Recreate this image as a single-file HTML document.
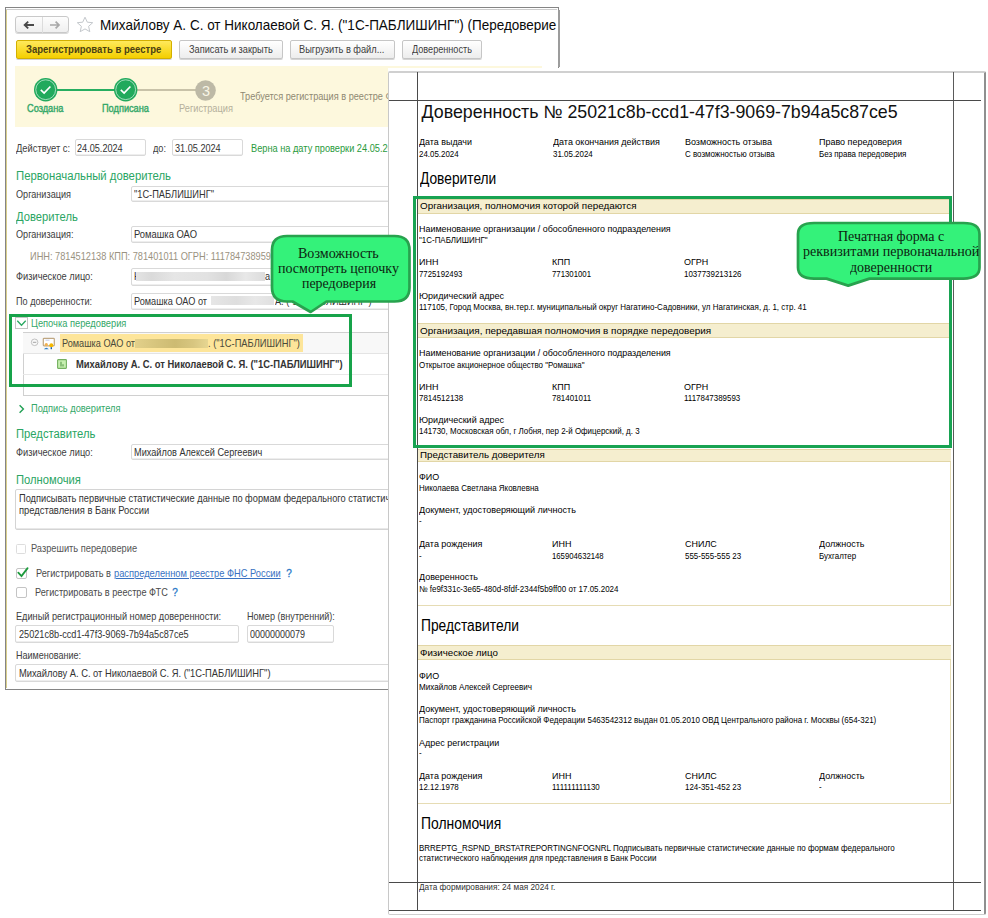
<!DOCTYPE html>
<html><head><meta charset="utf-8"><style>
html,body{margin:0;padding:0;}
body{width:988px;height:918px;position:relative;overflow:hidden;background:#fff;}
.t{position:absolute;white-space:nowrap;line-height:1;transform-origin:0 0;}
.r{position:absolute;}
</style></head><body>
<div class="r" style="left:5.00px;top:7.00px;width:554.00px;height:683.00px;border:1.4px solid #858585;border-bottom-width:1.6px;background:#fff;box-sizing:border-box;"></div>
<div class="r" style="left:6.40px;top:9.00px;width:551.00px;height:1.00px;background:#cdcdcd;"></div>
<div class="r" style="left:6.00px;top:9.50px;width:1.00px;height:678.00px;background:#d9cf8c;"></div>
<div class="r" style="left:15.00px;top:15.50px;width:53.50px;height:17.50px;border:1px solid #c9c9c9;border-radius:3px;background:linear-gradient(#fdfdfd,#efefef);box-sizing:border-box;box-shadow:0 1px 0 #d8d8d8;"></div>
<div class="r" style="left:42.40px;top:16.50px;width:1.00px;height:16.00px;background:#dcdcdc;"></div>
<svg class="r" style="left:23px;top:20px" width="14" height="10" viewBox="0 0 14 10"><path d="M1.5 5H11M5.2 1.6L1.6 5l3.6 3.4" fill="none" stroke="#4a4a4a" stroke-width="1.8"/></svg>
<svg class="r" style="left:49px;top:19.5px" width="14" height="10" viewBox="0 0 14 10"><path d="M1 5H9.5M6.6 1.6L10 5l-3.4 3.4" fill="none" stroke="#a8a8a8" stroke-width="1.7"/></svg>
<svg class="r" style="left:76px;top:16px" width="18" height="17" viewBox="0 0 18 17"><path d="M9 1.2l2.3 5 5.4.5-4.1 3.6 1.2 5.4L9 12.9l-4.8 2.8 1.2-5.4L1.3 6.7l5.4-.5z" fill="none" stroke="#c4c8cc" stroke-width="1"/></svg>
<div class="t" style="left:100.30px;top:18.00px;font-size:14.30px;color:#0a0a0a;font-family:'Liberation Sans', sans-serif;font-weight:400;transform:scaleX(0.9445);">Михайлову А. С. от Николаевой С. Я. (&quot;1С-ПАБЛИШИНГ&quot;) (Передоверие</div>
<div class="r" style="left:558.00px;top:10.00px;width:2.00px;height:57.00px;background:#9c9c9c;"></div>
<div class="r" style="left:15.50px;top:40.30px;width:156.30px;height:18.40px;border:1px solid #d3b000;border-radius:2px;background:linear-gradient(#ffe95c,#f4cf00);box-sizing:border-box;box-shadow:0 1px 0 #d0d0d0;"></div>
<div class="t" style="left:25.90px;top:45.00px;font-size:10.20px;color:#4a4112;font-family:'Liberation Sans', sans-serif;font-weight:700;transform:scaleX(0.9329);">Зарегистрировать в реестре</div>
<div class="r" style="left:178.50px;top:40.30px;width:104.00px;height:18.40px;border:1px solid #c6c6c6;border-radius:2px;background:linear-gradient(#ffffff,#ededed);box-sizing:border-box;box-shadow:0 1px 0 #d5d5d5;"></div>
<div class="t" style="left:188.70px;top:45.00px;font-size:10.20px;color:#404040;font-family:'Liberation Sans', sans-serif;font-weight:400;transform:scaleX(0.9034);">Записать и закрыть</div>
<div class="r" style="left:289.70px;top:40.30px;width:105.30px;height:18.40px;border:1px solid #c6c6c6;border-radius:2px;background:linear-gradient(#ffffff,#ededed);box-sizing:border-box;box-shadow:0 1px 0 #d5d5d5;"></div>
<div class="t" style="left:299.40px;top:45.00px;font-size:10.20px;color:#404040;font-family:'Liberation Sans', sans-serif;font-weight:400;transform:scaleX(0.9079);">Выгрузить в файл...</div>
<div class="r" style="left:402.20px;top:40.30px;width:80.10px;height:18.40px;border:1px solid #c6c6c6;border-radius:2px;background:linear-gradient(#ffffff,#ededed);box-sizing:border-box;box-shadow:0 1px 0 #d5d5d5;"></div>
<div class="t" style="left:411.90px;top:45.00px;font-size:10.20px;color:#404040;font-family:'Liberation Sans', sans-serif;font-weight:400;transform:scaleX(0.8949);">Доверенность</div>
<div class="r" style="left:15.30px;top:66.00px;width:527.00px;height:60.50px;background:#fdf8dd;"></div>
<div class="r" style="left:45.50px;top:88.60px;width:80.00px;height:2.40px;background:#27ae60;"></div>
<div class="r" style="left:125.50px;top:89.00px;width:80.00px;height:1.60px;background:#c8c2a8;"></div>
<svg class="r" style="left:33.8px;top:78.2px" width="24" height="24" viewBox="0 0 24 24"><circle cx="11.7" cy="11.7" r="11.7" fill="#21a95c"/><circle cx="11.7" cy="11.7" r="9.9" fill="none" stroke="#d6f2e2" stroke-width="0.7"/><path d="M6.8 11.9l3.3 3.2 6.3-6.6" fill="none" stroke="#fff" stroke-width="1.7"/></svg>
<svg class="r" style="left:113.8px;top:78.2px" width="24" height="24" viewBox="0 0 24 24"><circle cx="11.7" cy="11.7" r="11.7" fill="#21a95c"/><circle cx="11.7" cy="11.7" r="9.9" fill="none" stroke="#d6f2e2" stroke-width="0.7"/><path d="M6.8 11.9l3.3 3.2 6.3-6.6" fill="none" stroke="#fff" stroke-width="1.7"/></svg>
<svg class="r" style="left:195.3px;top:79.5px" width="21" height="21" viewBox="0 0 21 21"><circle cx="10.5" cy="10.5" r="10.3" fill="#bdb9a6"/></svg>
<div class="t" style="left:201.90px;top:84.00px;font-size:14.50px;color:#f8f5e6;font-family:'Liberation Sans', sans-serif;font-weight:400;">3</div>
<div class="t" style="left:27.40px;top:104.00px;font-size:10.20px;color:#35a869;font-family:'Liberation Sans', sans-serif;font-weight:400;transform:scaleX(0.9055);-webkit-text-stroke:0.4px #35a869;">Создана</div>
<div class="t" style="left:101.80px;top:104.00px;font-size:10.20px;color:#35a869;font-family:'Liberation Sans', sans-serif;font-weight:400;transform:scaleX(0.9033);-webkit-text-stroke:0.4px #35a869;">Подписана</div>
<div class="t" style="left:178.50px;top:104.00px;font-size:10.20px;color:#b5b09c;font-family:'Liberation Sans', sans-serif;font-weight:400;transform:scaleX(0.9056);">Регистрация</div>
<div class="t" style="left:240.00px;top:92.00px;font-size:10.20px;color:#8f8872;font-family:'Liberation Sans', sans-serif;font-weight:400;transform:scaleX(0.9000);">Требуется регистрация в реестре Ф</div>
<div class="t" style="left:15.70px;top:144.00px;font-size:10.20px;color:#404040;font-family:'Liberation Sans', sans-serif;font-weight:400;transform:scaleX(0.9186);">Действует с:</div>
<div class="r" style="left:74.50px;top:139.20px;width:71.50px;height:17.00px;border:1px solid #d9d9d9;border-radius:2px;background:#fff;box-sizing:border-box;box-shadow:inset 0 -1px 0 #eeeeee;"></div>
<div class="t" style="left:76.50px;top:144.00px;font-size:10.30px;color:#333333;font-family:'Liberation Sans', sans-serif;font-weight:400;transform:scaleX(0.8865);">24.05.2024</div>
<div class="t" style="left:153.30px;top:144.00px;font-size:10.20px;color:#404040;font-family:'Liberation Sans', sans-serif;font-weight:400;transform:scaleX(0.9000);">до:</div>
<div class="r" style="left:171.60px;top:139.20px;width:71.80px;height:17.10px;border:1px solid #d9d9d9;border-radius:2px;background:#fff;box-sizing:border-box;box-shadow:inset 0 -1px 0 #eeeeee;"></div>
<div class="t" style="left:175.00px;top:144.00px;font-size:10.30px;color:#333333;font-family:'Liberation Sans', sans-serif;font-weight:400;transform:scaleX(0.8865);">31.05.2024</div>
<div class="t" style="left:251.30px;top:144.00px;font-size:10.40px;color:#2a9a3c;font-family:'Liberation Sans', sans-serif;font-weight:400;transform:scaleX(0.8878);">Верна на дату проверки 24.05.2024</div>
<div class="t" style="left:15.50px;top:170.00px;font-size:12.00px;color:#2aa563;font-family:'Liberation Sans', sans-serif;font-weight:400;transform:scaleX(0.9437);">Первоначальный доверитель</div>
<div class="t" style="left:15.70px;top:190.00px;font-size:10.20px;color:#404040;font-family:'Liberation Sans', sans-serif;font-weight:400;transform:scaleX(0.8940);">Организация</div>
<div class="r" style="left:131.00px;top:185.70px;width:261.00px;height:16.60px;border:1px solid #d9d9d9;border-radius:2px;background:#fff;box-sizing:border-box;box-shadow:inset 0 -1px 0 #eeeeee;"></div>
<div class="t" style="left:133.80px;top:190.00px;font-size:10.30px;color:#333333;font-family:'Liberation Sans', sans-serif;font-weight:400;transform:scaleX(0.8992);">&quot;1С-ПАБЛИШИНГ&quot;</div>
<div class="t" style="left:15.50px;top:211.00px;font-size:12.00px;color:#2aa563;font-family:'Liberation Sans', sans-serif;font-weight:400;transform:scaleX(0.9350);">Доверитель</div>
<div class="t" style="left:15.70px;top:230.00px;font-size:10.20px;color:#404040;font-family:'Liberation Sans', sans-serif;font-weight:400;transform:scaleX(0.8935);">Организация:</div>
<div class="r" style="left:130.60px;top:225.70px;width:261.40px;height:17.70px;border:1px solid #d9d9d9;border-radius:2px;background:#fff;box-sizing:border-box;box-shadow:inset 0 -1px 0 #eeeeee;"></div>
<div class="t" style="left:133.80px;top:230.00px;font-size:10.30px;color:#333333;font-family:'Liberation Sans', sans-serif;font-weight:400;transform:scaleX(0.9133);">Ромашка ОАО</div>
<div class="t" style="left:29.80px;top:252.00px;font-size:10.20px;color:#9a9281;font-family:'Liberation Sans', sans-serif;font-weight:400;transform:scaleX(0.9050);">ИНН: 7814512138 КПП: 781401011 ОГРН: 1117847389593</div>
<div class="t" style="left:15.70px;top:272.00px;font-size:10.20px;color:#404040;font-family:'Liberation Sans', sans-serif;font-weight:400;transform:scaleX(0.9095);">Физическое лицо:</div>
<div class="r" style="left:130.60px;top:268.30px;width:261.40px;height:17.30px;border:1px solid #d9d9d9;border-radius:2px;background:#fff;box-sizing:border-box;box-shadow:inset 0 -1px 0 #eeeeee;"></div>
<div class="t" style="left:133.80px;top:272.00px;font-size:10.30px;color:#333333;font-family:'Liberation Sans', sans-serif;font-weight:400;transform:scaleX(0.8900);">Н</div>
<div class="r" style="left:136.00px;top:272.00px;width:129.00px;height:9.00px;background:linear-gradient(90deg,#e4e4e4,#dadada 12%,#e6e6e6 30%,#e2e2e2 55%,#d8d8d8 70%,#e8e8e8 85%,#dcdcdc);"></div>
<div class="t" style="left:264.50px;top:272.00px;font-size:10.30px;color:#333333;font-family:'Liberation Sans', sans-serif;font-weight:400;transform:scaleX(0.8900);">а</div>
<div class="t" style="left:15.70px;top:297.00px;font-size:10.20px;color:#404040;font-family:'Liberation Sans', sans-serif;font-weight:400;transform:scaleX(0.8950);">По доверенности:</div>
<div class="r" style="left:130.60px;top:292.90px;width:261.40px;height:17.50px;border:1px solid #d9d9d9;border-radius:2px;background:#fff;box-sizing:border-box;box-shadow:inset 0 -1px 0 #eeeeee;"></div>
<div class="t" style="left:133.80px;top:297.00px;font-size:10.30px;color:#333333;font-family:'Liberation Sans', sans-serif;font-weight:400;transform:scaleX(0.8900);">Ромашка ОАО от</div>
<div class="r" style="left:211.20px;top:296.30px;width:62.70px;height:9.00px;background:linear-gradient(90deg,#e6e6e6,#dedede 40%,#e8e8e8 70%,#e0e0e0);"></div>
<div class="t" style="left:274.60px;top:297.00px;font-size:10.30px;color:#333333;font-family:'Liberation Sans', sans-serif;font-weight:400;transform:scaleX(0.8900);">А. (&quot;1С-ПАБЛИШИНГ&quot;)</div>
<div class="r" style="left:22.70px;top:332.30px;width:370.00px;height:64.00px;border:1.3px solid #d0d0d0;border-right:none;background:#fff;box-sizing:border-box;"></div>
<div class="r" style="left:23.40px;top:333.30px;width:366.00px;height:19.80px;background:#f8f8f8;"></div>
<div class="r" style="left:23.40px;top:353.10px;width:366.00px;height:1.00px;background:#e4e4e4;"></div>
<div class="r" style="left:23.40px;top:374.20px;width:366.00px;height:1.00px;background:#e8e8e8;"></div>
<div class="r" style="left:59.90px;top:333.50px;width:243.00px;height:18.60px;background:#fde59a;"></div>
<div class="t" style="left:61.60px;top:339.00px;font-size:10.30px;color:#4a4a3a;font-family:'Liberation Sans', sans-serif;font-weight:400;transform:scaleX(0.8895);">Ромашка ОАО от</div>
<div class="r" style="left:135.00px;top:338.90px;width:73.00px;height:8.70px;background:linear-gradient(90deg,#e2d08a,#d6c47c 30%,#cdbb72 55%,#d8c680 80%,#e6d692);"></div>
<div class="t" style="left:207.90px;top:339.00px;font-size:10.30px;color:#4a4a3a;font-family:'Liberation Sans', sans-serif;font-weight:400;transform:scaleX(0.9060);">. (&quot;1С-ПАБЛИШИНГ&quot;)</div>
<div class="t" style="left:75.50px;top:360.00px;font-size:10.30px;color:#333333;font-family:'Liberation Sans', sans-serif;font-weight:700;transform:scaleX(0.9130);">Михайлову А. С. от Николаевой С. Я. (&quot;1С-ПАБЛИШИНГ&quot;)</div>
<svg class="r" style="left:30px;top:338px" width="9" height="9" viewBox="0 0 9 9"><circle cx="4.6" cy="4.3" r="3.3" fill="none" stroke="#b4b4b4" stroke-width="0.8"/><path d="M2.9 4.3h3.4" stroke="#9a9a9a" stroke-width="0.9"/></svg>
<svg class="r" style="left:42px;top:337px" width="14" height="13" viewBox="0 0 14 13"><rect x="1.3" y="1.3" width="11" height="7.6" rx="0.8" fill="#fff" stroke="#bfa782" stroke-width="1.2"/><path d="M3.5 3.2h4" stroke="#9aa8e0" stroke-width="0.6"/><circle cx="4.3" cy="7.6" r="1.6" fill="#f0b050"/><path d="M1.8 12.2q2.5-3 5 0z" fill="#2f80c8"/><circle cx="9.3" cy="8.2" r="2" fill="#f5b800"/><rect x="8.6" y="10.2" width="1.4" height="2" fill="#1a5fa8"/></svg>
<svg class="r" style="left:57px;top:359px" width="10" height="10" viewBox="0 0 10 10"><rect x="0.6" y="0.6" width="8.8" height="8.8" rx="0.6" fill="#c6efb0" stroke="#74b060" stroke-width="1.1"/><path d="M3 2.8v4.6h4V5.2H5V2.8z" fill="#8ac078"/></svg>
<div class="r" style="left:15.20px;top:317.30px;width:12.40px;height:12.20px;border:1px solid #c4c4c4;background:#fff;box-sizing:border-box;"></div>
<svg class="r" style="left:16px;top:319px" width="11" height="9" viewBox="0 0 11 9"><path d="M1.3 1.8l4.2 4.4 4.2-4.4" fill="none" stroke="#2aa862" stroke-width="1.3"/></svg>
<div class="t" style="left:30.70px;top:319.00px;font-size:10.20px;color:#35a869;font-family:'Liberation Sans', sans-serif;font-weight:400;transform:scaleX(0.9138);">Цепочка передоверия</div>
<div class="r" style="left:9.30px;top:314.00px;width:343.00px;height:72.60px;border:3px solid #17a34a;box-sizing:border-box;"></div>
<svg class="r" style="left:18px;top:404px" width="8" height="10" viewBox="0 0 8 10"><path d="M1.6 1.2l3.8 3.8-3.8 3.8" fill="none" stroke="#22a055" stroke-width="1.4"/></svg>
<div class="t" style="left:30.80px;top:404.00px;font-size:10.20px;color:#35a869;font-family:'Liberation Sans', sans-serif;font-weight:400;transform:scaleX(0.9093);">Подпись доверителя</div>
<div class="t" style="left:15.80px;top:428.00px;font-size:12.00px;color:#2aa563;font-family:'Liberation Sans', sans-serif;font-weight:400;transform:scaleX(0.9361);">Представитель</div>
<div class="t" style="left:15.80px;top:448.00px;font-size:10.20px;color:#404040;font-family:'Liberation Sans', sans-serif;font-weight:400;transform:scaleX(0.9095);">Физическое лицо:</div>
<div class="r" style="left:130.60px;top:443.60px;width:261.40px;height:16.60px;border:1px solid #d9d9d9;border-radius:2px;background:#fff;box-sizing:border-box;box-shadow:inset 0 -1px 0 #eeeeee;"></div>
<div class="t" style="left:133.80px;top:448.00px;font-size:10.30px;color:#333333;font-family:'Liberation Sans', sans-serif;font-weight:400;transform:scaleX(0.8900);">Михайлов Алексей Сергеевич</div>
<div class="t" style="left:15.80px;top:474.00px;font-size:12.00px;color:#2aa563;font-family:'Liberation Sans', sans-serif;font-weight:400;transform:scaleX(0.9330);">Полномочия</div>
<div class="r" style="left:15.20px;top:489.10px;width:376.60px;height:40.80px;border:1px solid #d4d4d4;border-radius:2px;background:#fff;box-sizing:border-box;box-shadow:inset 0 -1px 0 #e8e8e8;"></div>
<div class="t" style="left:18.60px;top:494.00px;font-size:10.30px;color:#333333;font-family:'Liberation Sans', sans-serif;font-weight:400;transform:scaleX(0.8989);">Подписывать первичные статистические данные по формам федерального статистического</div>
<div class="t" style="left:18.60px;top:506.00px;font-size:10.30px;color:#333333;font-family:'Liberation Sans', sans-serif;font-weight:400;transform:scaleX(0.9106);">представления в Банк России</div>
<div class="r" style="left:16.20px;top:543.80px;width:10.20px;height:10.20px;border:1px solid #dddddd;border-radius:1.5px;background:#fff;box-sizing:border-box;"></div>
<div class="t" style="left:31.40px;top:544.00px;font-size:10.20px;color:#555555;font-family:'Liberation Sans', sans-serif;font-weight:400;transform:scaleX(0.9099);">Разрешить передоверие</div>
<div class="r" style="left:16.30px;top:568.30px;width:10.60px;height:11.00px;border:1px solid #c4c4c4;border-radius:2px;background:#fff;box-sizing:border-box;"></div>
<svg class="r" style="left:16px;top:565px" width="13" height="13" viewBox="0 0 13 13"><path d="M2.3 7.6L5.5 11.1L11.6 3.1" fill="none" stroke="#1c9a3c" stroke-width="1.8" stroke-linecap="round"/></svg>
<div class="t" style="left:36.00px;top:569.00px;font-size:10.20px;color:#4a4a4a;font-family:'Liberation Sans', sans-serif;font-weight:400;transform:scaleX(0.9044);">Регистрировать в</div>
<div class="t" style="left:113.80px;top:569.00px;font-size:10.20px;color:#3a72c2;font-family:'Liberation Sans', sans-serif;font-weight:400;transform:scaleX(0.9135);text-decoration:underline;">распределенном реестре ФНС России</div>
<div class="t" style="left:286.20px;top:569.00px;font-size:10.00px;color:#2a7ac8;font-family:'Liberation Sans', sans-serif;font-weight:400;-webkit-text-stroke:0.3px #2a7ac8;">?</div>
<div class="r" style="left:16.30px;top:587.20px;width:10.60px;height:10.50px;border:1px solid #c4c4c4;border-radius:2px;background:#fff;box-sizing:border-box;"></div>
<div class="t" style="left:35.00px;top:588.00px;font-size:10.20px;color:#4a4a4a;font-family:'Liberation Sans', sans-serif;font-weight:400;transform:scaleX(0.9016);">Регистрировать в реестре ФТС</div>
<div class="t" style="left:172.30px;top:588.00px;font-size:10.00px;color:#2a7ac8;font-family:'Liberation Sans', sans-serif;font-weight:400;-webkit-text-stroke:0.3px #2a7ac8;">?</div>
<div class="t" style="left:15.80px;top:612.00px;font-size:10.20px;color:#404040;font-family:'Liberation Sans', sans-serif;font-weight:400;transform:scaleX(0.9014);">Единый регистрационный номер доверенности:</div>
<div class="t" style="left:246.80px;top:612.00px;font-size:10.20px;color:#404040;font-family:'Liberation Sans', sans-serif;font-weight:400;transform:scaleX(0.8917);">Номер (внутренний):</div>
<div class="r" style="left:15.20px;top:625.30px;width:224.30px;height:17.60px;border:1px solid #d9d9d9;border-radius:2px;background:#fff;box-sizing:border-box;box-shadow:inset 0 -1px 0 #eeeeee;"></div>
<div class="t" style="left:18.60px;top:630.00px;font-size:10.30px;color:#333333;font-family:'Liberation Sans', sans-serif;font-weight:400;transform:scaleX(0.8872);">25021c8b-ccd1-47f3-9069-7b94a5c87ce5</div>
<div class="r" style="left:247.30px;top:625.30px;width:86.40px;height:17.60px;border:1px solid #d9d9d9;border-radius:2px;background:#fff;box-sizing:border-box;box-shadow:inset 0 -1px 0 #eeeeee;"></div>
<div class="t" style="left:250.20px;top:630.00px;font-size:10.30px;color:#333333;font-family:'Liberation Sans', sans-serif;font-weight:400;transform:scaleX(0.8728);">00000000079</div>
<div class="t" style="left:15.80px;top:651.00px;font-size:10.20px;color:#404040;font-family:'Liberation Sans', sans-serif;font-weight:400;transform:scaleX(0.8866);">Наименование:</div>
<div class="r" style="left:15.20px;top:664.40px;width:376.80px;height:17.60px;border:1px solid #d9d9d9;border-radius:2px;background:#fff;box-sizing:border-box;box-shadow:inset 0 -1px 0 #eeeeee;"></div>
<div class="t" style="left:18.60px;top:669.00px;font-size:10.30px;color:#333333;font-family:'Liberation Sans', sans-serif;font-weight:400;transform:scaleX(0.9069);">Михайлову А. С. от Николаевой С. Я. (&quot;1С-ПАБЛИШИНГ&quot;)</div>
<div class="r" style="left:387.50px;top:68.00px;width:601.00px;height:850.00px;background:#fff;"></div>
<div class="r" style="left:388.00px;top:71.00px;width:598.00px;height:843.50px;border:1px solid #c8c8c8;border-top:2px solid #d0d0d0;border-right:2px solid #8f8f8f;border-bottom:1.5px solid #cfcfcf;border-radius:2px;box-sizing:border-box;"></div>
<div class="r" style="left:416.60px;top:72.00px;width:1.60px;height:839.00px;background:#4a4a4a;"></div>
<div class="r" style="left:952.50px;top:72.00px;width:1.30px;height:839.00px;background:#5a5a5a;"></div>
<div class="r" style="left:389.00px;top:99.80px;width:592.00px;height:1.50px;background:#4a4a4a;"></div>
<div class="r" style="left:389.00px;top:881.80px;width:592.00px;height:1.40px;background:#4a4a4a;"></div>
<div class="r" style="left:389.00px;top:910.00px;width:592.00px;height:1.30px;background:#4a4a4a;"></div>
<div class="t" style="left:421.60px;top:104.00px;font-size:17.80px;color:#111111;font-family:'Liberation Sans', sans-serif;font-weight:400;">Доверенность № 25021c8b-ccd1-47f3-9069-7b94a5c87ce5</div>
<div class="t" style="left:419.40px;top:138.00px;font-size:8.80px;color:#000000;font-family:'Liberation Sans', sans-serif;font-weight:400;transform:scaleX(1.0140);">Дата выдачи</div>
<div class="t" style="left:419.40px;top:150.00px;font-size:8.60px;color:#000000;font-family:'Liberation Sans', sans-serif;font-weight:400;transform:scaleX(0.9223);">24.05.2024</div>
<div class="t" style="left:553.00px;top:138.00px;font-size:8.80px;color:#000000;font-family:'Liberation Sans', sans-serif;font-weight:400;transform:scaleX(1.0200);">Дата окончания действия</div>
<div class="t" style="left:553.00px;top:150.00px;font-size:8.60px;color:#000000;font-family:'Liberation Sans', sans-serif;font-weight:400;transform:scaleX(0.9250);">31.05.2024</div>
<div class="t" style="left:685.00px;top:138.00px;font-size:8.80px;color:#000000;font-family:'Liberation Sans', sans-serif;font-weight:400;transform:scaleX(1.0200);">Возможность отзыва</div>
<div class="t" style="left:685.00px;top:150.00px;font-size:8.60px;color:#000000;font-family:'Liberation Sans', sans-serif;font-weight:400;transform:scaleX(0.9250);">С возможностью отзыва</div>
<div class="t" style="left:819.00px;top:138.00px;font-size:8.80px;color:#000000;font-family:'Liberation Sans', sans-serif;font-weight:400;transform:scaleX(1.0200);">Право передоверия</div>
<div class="t" style="left:819.00px;top:150.00px;font-size:8.60px;color:#000000;font-family:'Liberation Sans', sans-serif;font-weight:400;transform:scaleX(0.9250);">Без права передоверия</div>
<div class="t" style="left:420.30px;top:171.00px;font-size:15.80px;color:#000000;font-family:'Liberation Sans', sans-serif;font-weight:400;transform:scaleX(0.8705);">Доверители</div>
<div class="r" style="left:417.50px;top:199.20px;width:533.00px;height:14.40px;background:#f5eecf;border-top:1px solid #e2d6a6;border-bottom:1px solid #e2d6a6;box-sizing:border-box;"></div>
<div class="t" style="left:419.60px;top:201.00px;font-size:9.50px;color:#000000;font-family:'Liberation Sans', sans-serif;font-weight:400;transform:scaleX(1.0381);">Организация, полномочия которой передаются</div>
<div class="t" style="left:419.40px;top:225.00px;font-size:8.80px;color:#000000;font-family:'Liberation Sans', sans-serif;font-weight:400;transform:scaleX(1.0138);">Наименование организации / обособленного подразделения</div>
<div class="t" style="left:419.40px;top:236.00px;font-size:8.60px;color:#000000;font-family:'Liberation Sans', sans-serif;font-weight:400;transform:scaleX(0.9250);">&quot;1С-ПАБЛИШИНГ&quot;</div>
<div class="t" style="left:419.40px;top:258.00px;font-size:8.80px;color:#000000;font-family:'Liberation Sans', sans-serif;font-weight:400;transform:scaleX(1.0200);">ИНН</div>
<div class="t" style="left:419.40px;top:270.00px;font-size:8.60px;color:#000000;font-family:'Liberation Sans', sans-serif;font-weight:400;transform:scaleX(0.9074);">7725192493</div>
<div class="t" style="left:552.40px;top:258.00px;font-size:8.80px;color:#000000;font-family:'Liberation Sans', sans-serif;font-weight:400;transform:scaleX(1.0200);">КПП</div>
<div class="t" style="left:552.40px;top:270.00px;font-size:8.60px;color:#000000;font-family:'Liberation Sans', sans-serif;font-weight:400;transform:scaleX(0.9060);">771301001</div>
<div class="t" style="left:684.40px;top:258.00px;font-size:8.80px;color:#000000;font-family:'Liberation Sans', sans-serif;font-weight:400;transform:scaleX(1.0200);">ОГРН</div>
<div class="t" style="left:684.40px;top:270.00px;font-size:8.60px;color:#000000;font-family:'Liberation Sans', sans-serif;font-weight:400;transform:scaleX(0.9250);">1037739213126</div>
<div class="t" style="left:419.40px;top:292.00px;font-size:8.80px;color:#000000;font-family:'Liberation Sans', sans-serif;font-weight:400;transform:scaleX(1.0244);">Юридический адрес</div>
<div class="t" style="left:419.40px;top:303.00px;font-size:8.60px;color:#000000;font-family:'Liberation Sans', sans-serif;font-weight:400;transform:scaleX(0.9294);">117105, Город Москва, вн.тер.г. муниципальный округ Нагатино-Садовники, ул Нагатинская, д. 1, стр. 41</div>
<div class="r" style="left:417.50px;top:322.70px;width:533.00px;height:15.10px;background:#f5eecf;border-top:1px solid #e2d6a6;border-bottom:1px solid #e2d6a6;box-sizing:border-box;"></div>
<div class="t" style="left:419.60px;top:326.00px;font-size:9.50px;color:#000000;font-family:'Liberation Sans', sans-serif;font-weight:400;transform:scaleX(1.0408);">Организация, передавшая полномочия в порядке передоверия</div>
<div class="t" style="left:419.40px;top:349.00px;font-size:8.80px;color:#000000;font-family:'Liberation Sans', sans-serif;font-weight:400;transform:scaleX(1.0138);">Наименование организации / обособленного подразделения</div>
<div class="t" style="left:419.40px;top:361.00px;font-size:8.60px;color:#000000;font-family:'Liberation Sans', sans-serif;font-weight:400;transform:scaleX(0.9250);">Открытое акционерное общество &quot;Ромашка&quot;</div>
<div class="t" style="left:419.40px;top:383.00px;font-size:8.80px;color:#000000;font-family:'Liberation Sans', sans-serif;font-weight:400;transform:scaleX(1.0200);">ИНН</div>
<div class="t" style="left:419.40px;top:394.00px;font-size:8.60px;color:#000000;font-family:'Liberation Sans', sans-serif;font-weight:400;transform:scaleX(0.9250);">7814512138</div>
<div class="t" style="left:552.40px;top:383.00px;font-size:8.80px;color:#000000;font-family:'Liberation Sans', sans-serif;font-weight:400;transform:scaleX(1.0200);">КПП</div>
<div class="t" style="left:552.40px;top:394.00px;font-size:8.60px;color:#000000;font-family:'Liberation Sans', sans-serif;font-weight:400;transform:scaleX(0.9250);">781401011</div>
<div class="t" style="left:684.40px;top:383.00px;font-size:8.80px;color:#000000;font-family:'Liberation Sans', sans-serif;font-weight:400;transform:scaleX(1.0200);">ОГРН</div>
<div class="t" style="left:684.40px;top:394.00px;font-size:8.60px;color:#000000;font-family:'Liberation Sans', sans-serif;font-weight:400;transform:scaleX(0.9250);">1117847389593</div>
<div class="t" style="left:419.40px;top:416.00px;font-size:8.80px;color:#000000;font-family:'Liberation Sans', sans-serif;font-weight:400;transform:scaleX(1.0244);">Юридический адрес</div>
<div class="t" style="left:419.40px;top:427.00px;font-size:8.60px;color:#000000;font-family:'Liberation Sans', sans-serif;font-weight:400;transform:scaleX(0.9250);">141730, Московская обл, г Лобня, пер 2-й Офицерский, д. 3</div>
<div class="r" style="left:413.10px;top:195.90px;width:539.40px;height:252.10px;border:3.2px solid #18a352;border-left-width:3.7px;box-sizing:border-box;"></div>
<div class="r" style="left:417.50px;top:448.50px;width:533.00px;height:157.80px;border:1px solid #e6dcb4;border-left:none;box-sizing:border-box;"></div>
<div class="r" style="left:417.50px;top:448.50px;width:533.00px;height:13.10px;background:#f5eecf;border-top:1px solid #e2d6a6;border-bottom:1px solid #e2d6a6;box-sizing:border-box;"></div>
<div class="t" style="left:419.60px;top:450.00px;font-size:9.50px;color:#000000;font-family:'Liberation Sans', sans-serif;font-weight:400;transform:scaleX(1.0285);">Представитель доверителя</div>
<div class="t" style="left:419.40px;top:473.00px;font-size:8.80px;color:#000000;font-family:'Liberation Sans', sans-serif;font-weight:400;transform:scaleX(1.0200);">ФИО</div>
<div class="t" style="left:419.40px;top:484.00px;font-size:8.60px;color:#000000;font-family:'Liberation Sans', sans-serif;font-weight:400;transform:scaleX(0.9253);">Николаева Светлана Яковлевна</div>
<div class="t" style="left:419.40px;top:506.00px;font-size:8.80px;color:#000000;font-family:'Liberation Sans', sans-serif;font-weight:400;transform:scaleX(1.0270);">Документ, удостоверяющий личность</div>
<div class="t" style="left:419.40px;top:517.00px;font-size:8.60px;color:#000000;font-family:'Liberation Sans', sans-serif;font-weight:400;transform:scaleX(0.9250);">-</div>
<div class="t" style="left:419.40px;top:540.00px;font-size:8.80px;color:#000000;font-family:'Liberation Sans', sans-serif;font-weight:400;transform:scaleX(1.0200);">Дата рождения</div>
<div class="t" style="left:419.40px;top:552.00px;font-size:8.60px;color:#000000;font-family:'Liberation Sans', sans-serif;font-weight:400;transform:scaleX(0.9250);">-</div>
<div class="t" style="left:552.40px;top:540.00px;font-size:8.80px;color:#000000;font-family:'Liberation Sans', sans-serif;font-weight:400;transform:scaleX(1.0200);">ИНН</div>
<div class="t" style="left:552.40px;top:552.00px;font-size:8.60px;color:#000000;font-family:'Liberation Sans', sans-serif;font-weight:400;transform:scaleX(0.9007);">165904632148</div>
<div class="t" style="left:685.00px;top:540.00px;font-size:8.80px;color:#000000;font-family:'Liberation Sans', sans-serif;font-weight:400;transform:scaleX(1.0200);">СНИЛС</div>
<div class="t" style="left:685.00px;top:552.00px;font-size:8.60px;color:#000000;font-family:'Liberation Sans', sans-serif;font-weight:400;transform:scaleX(0.9250);">555-555-555 23</div>
<div class="t" style="left:819.00px;top:540.00px;font-size:8.80px;color:#000000;font-family:'Liberation Sans', sans-serif;font-weight:400;transform:scaleX(1.0200);">Должность</div>
<div class="t" style="left:819.00px;top:552.00px;font-size:8.60px;color:#000000;font-family:'Liberation Sans', sans-serif;font-weight:400;transform:scaleX(0.9250);">Бухгалтер</div>
<div class="t" style="left:419.40px;top:573.00px;font-size:8.80px;color:#000000;font-family:'Liberation Sans', sans-serif;font-weight:400;transform:scaleX(1.0200);">Доверенность</div>
<div class="t" style="left:419.40px;top:585.00px;font-size:8.60px;color:#000000;font-family:'Liberation Sans', sans-serif;font-weight:400;transform:scaleX(0.9280);">№ fe9f331c-3e65-480d-8fdf-2344f5b9ff00 от 17.05.2024</div>
<div class="t" style="left:421.20px;top:618.00px;font-size:15.80px;color:#000000;font-family:'Liberation Sans', sans-serif;font-weight:400;transform:scaleX(0.8739);">Представители</div>
<div class="r" style="left:417.50px;top:645.10px;width:533.00px;height:158.90px;border:1px solid #e6dcb4;border-left:none;box-sizing:border-box;"></div>
<div class="r" style="left:417.50px;top:645.10px;width:533.00px;height:15.00px;background:#f5eecf;border-top:1px solid #e2d6a6;border-bottom:1px solid #e2d6a6;box-sizing:border-box;"></div>
<div class="t" style="left:419.60px;top:648.00px;font-size:9.50px;color:#000000;font-family:'Liberation Sans', sans-serif;font-weight:400;transform:scaleX(1.0222);">Физическое лицо</div>
<div class="t" style="left:419.40px;top:672.00px;font-size:8.80px;color:#000000;font-family:'Liberation Sans', sans-serif;font-weight:400;transform:scaleX(1.0200);">ФИО</div>
<div class="t" style="left:419.40px;top:683.00px;font-size:8.60px;color:#000000;font-family:'Liberation Sans', sans-serif;font-weight:400;transform:scaleX(0.9383);">Михайлов Алексей Сергеевич</div>
<div class="t" style="left:419.40px;top:705.00px;font-size:8.80px;color:#000000;font-family:'Liberation Sans', sans-serif;font-weight:400;transform:scaleX(1.0270);">Документ, удостоверяющий личность</div>
<div class="t" style="left:419.40px;top:716.00px;font-size:8.60px;color:#000000;font-family:'Liberation Sans', sans-serif;font-weight:400;transform:scaleX(0.9299);">Паспорт гражданина Российской Федерации 5463542312 выдан 01.05.2010 ОВД Центрального района г. Москвы (654-321)</div>
<div class="t" style="left:419.40px;top:739.00px;font-size:8.80px;color:#000000;font-family:'Liberation Sans', sans-serif;font-weight:400;transform:scaleX(1.0200);">Адрес регистрации</div>
<div class="t" style="left:419.40px;top:749.00px;font-size:8.60px;color:#000000;font-family:'Liberation Sans', sans-serif;font-weight:400;transform:scaleX(0.9250);">-</div>
<div class="t" style="left:419.40px;top:772.00px;font-size:8.80px;color:#000000;font-family:'Liberation Sans', sans-serif;font-weight:400;transform:scaleX(1.0200);">Дата рождения</div>
<div class="t" style="left:419.40px;top:783.00px;font-size:8.60px;color:#000000;font-family:'Liberation Sans', sans-serif;font-weight:400;transform:scaleX(0.9250);">12.12.1978</div>
<div class="t" style="left:552.40px;top:772.00px;font-size:8.80px;color:#000000;font-family:'Liberation Sans', sans-serif;font-weight:400;transform:scaleX(1.0200);">ИНН</div>
<div class="t" style="left:552.40px;top:783.00px;font-size:8.60px;color:#000000;font-family:'Liberation Sans', sans-serif;font-weight:400;transform:scaleX(0.9250);">111111111130</div>
<div class="t" style="left:685.00px;top:772.00px;font-size:8.80px;color:#000000;font-family:'Liberation Sans', sans-serif;font-weight:400;transform:scaleX(1.0200);">СНИЛС</div>
<div class="t" style="left:685.00px;top:783.00px;font-size:8.60px;color:#000000;font-family:'Liberation Sans', sans-serif;font-weight:400;transform:scaleX(0.9250);">124-351-452 23</div>
<div class="t" style="left:819.00px;top:772.00px;font-size:8.80px;color:#000000;font-family:'Liberation Sans', sans-serif;font-weight:400;transform:scaleX(1.0200);">Должность</div>
<div class="t" style="left:819.00px;top:783.00px;font-size:8.60px;color:#000000;font-family:'Liberation Sans', sans-serif;font-weight:400;transform:scaleX(0.9250);">-</div>
<div class="t" style="left:421.20px;top:816.00px;font-size:15.80px;color:#000000;font-family:'Liberation Sans', sans-serif;font-weight:400;transform:scaleX(0.8792);">Полномочия</div>
<div class="t" style="left:419.40px;top:844.00px;font-size:8.60px;color:#000000;font-family:'Liberation Sans', sans-serif;font-weight:400;transform:scaleX(0.9287);">BRREPTG_RSPND_BRSTATREPORTINGNFOGNRL Подписывать первичные статистические данные по формам федерального</div>
<div class="t" style="left:419.40px;top:854.00px;font-size:8.60px;color:#000000;font-family:'Liberation Sans', sans-serif;font-weight:400;transform:scaleX(0.9319);">статистического наблюдения для представления в Банк России</div>
<div class="t" style="left:419.40px;top:883.00px;font-size:8.60px;color:#333333;font-family:'Liberation Sans', sans-serif;font-weight:400;transform:scaleX(0.9593);">Дата формирования: 24 мая 2024 г.</div>
<svg class="r" style="left:269.5px;top:233.5px" width="141.5" height="80.0" viewBox="0 0 141.5 80.0"><path d="M17.0 2.0 H124.5 Q139.5 2.0 139.5 16.0 V53.5 Q139.5 67.5 124.5 67.5 H56.5 L40.7 78.0 L22.5 67.5 H17.0 Q2.0 67.5 2.0 53.5 V16.0 Q2.0 2.0 17.0 2.0 Z" fill="#34f27a" stroke="#28a24e" stroke-width="2.7" stroke-linejoin="round"/></svg>
<div class="t" style="left:298.30px;top:247.00px;font-size:13.70px;color:#0c2410;font-family:'Liberation Serif', serif;font-weight:400;transform:scaleX(1.0268);">Возможность</div>
<div class="t" style="left:278.20px;top:262.00px;font-size:13.70px;color:#0c2410;font-family:'Liberation Serif', serif;font-weight:400;transform:scaleX(1.0243);">посмотреть цепочку</div>
<div class="t" style="left:301.65px;top:277.00px;font-size:13.70px;color:#0c2410;font-family:'Liberation Serif', serif;font-weight:400;transform:scaleX(1.0160);">передоверия</div>
<svg class="r" style="left:795.5px;top:221.0px" width="185.5" height="66.6" viewBox="0 0 185.5 66.6"><path d="M18.0 2.0 H167.5 Q183.5 2.0 183.5 13.0 V46.6 Q183.5 57.6 167.5 57.6 H73.5 L52.2 64.6 L30.5 57.6 H18.0 Q2.0 57.6 2.0 46.6 V13.0 Q2.0 2.0 18.0 2.0 Z" fill="#34f27a" stroke="#28a24e" stroke-width="2.7" stroke-linejoin="round"/></svg>
<div class="t" style="left:838.10px;top:230.00px;font-size:13.70px;color:#0c2410;font-family:'Liberation Serif', serif;font-weight:400;transform:scaleX(1.0221);">Печатная форма с</div>
<div class="t" style="left:803.00px;top:245.00px;font-size:13.70px;color:#0c2410;font-family:'Liberation Serif', serif;font-weight:400;transform:scaleX(1.0266);">реквизитами первоначальной</div>
<div class="t" style="left:850.10px;top:261.00px;font-size:13.70px;color:#0c2410;font-family:'Liberation Serif', serif;font-weight:400;transform:scaleX(1.0214);">доверенности</div>
</body></html>
